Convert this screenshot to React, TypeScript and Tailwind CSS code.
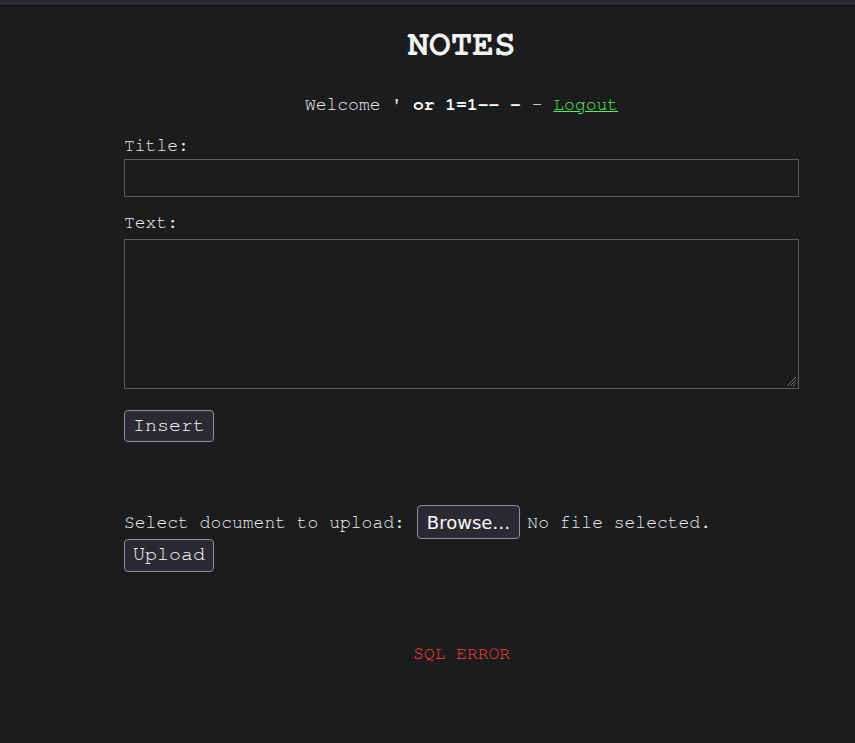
const ResizeGrip = () => (
  <svg width="11" height="11" viewBox="0 0 11 11" className="pointer-events-none absolute bottom-[2px] right-[2px]">
    <path d="M10 1L1 10M10 4L4 10M10 7L7 10" stroke="#6b6b6b" strokeWidth="1" />
  </svg>
);

const App = () => {
  return (
    <div className="min-h-[743px] bg-[#1b1c1e] font-['Nimbus_Mono_PS','FreeMono','Courier_New','Liberation_Mono',monospace] text-[18px] leading-[21px] text-[#ececec]">
      <div className="h-[6px] border-b border-[#0c0c0e] bg-[#2b2a33]" />

      <div className="ml-[124px] w-[675px]">
        <h1 className="mt-[18px] text-center text-[36px] font-bold leading-[41px] text-[#f2f2f2]">NOTES</h1>

        <p className="mt-[30px] text-center">
          Welcome ' <b className="font-bold text-[#ffffff]">or 1=1-- -</b> – <a href="#" className="text-[#55f055] underline">Logout</a>
        </p>

        <form className="mt-[20px]" onSubmit={(e) => e.preventDefault()}>
          <label className="block">Title:</label>
          <input
            type="text"
            className="mt-[2px] block h-[38px] w-full border border-[#5b5b5b] bg-transparent px-[4px] text-[#ececec] outline-none"
          />

          <label className="mt-[16px] block">Text:</label>
          <div className="relative mt-[5px]">
            <textarea className="block h-[150px] w-full resize-none border border-[#5b5b5b] bg-transparent p-[4px] text-[#ececec] outline-none" />
            <ResizeGrip />
          </div>

          <button
            type="submit"
            className="mt-[21px] block h-[32px] w-[90px] rounded-[4px] border border-[#8f8f9d] bg-[#2b2a33] pb-[3px] text-[20px] leading-[22px] text-[#fbfbfe]"
          >
            Insert
          </button>
        </form>

        <div className="mt-[63px]">
          <div className="flex h-[34px] items-center">
            <span className="mt-[3px]">Select document to upload:</span>
            <span className="ml-[12px] flex h-[34px] items-center rounded-[4px] border border-[#8f8f9d] bg-[#2b2a33] px-[9px] font-['DejaVu_Sans',sans-serif] text-[18px] text-[#fbfbfe]">
              Browse…
            </span>
            <span className="ml-[7px] mt-[3px]">No file selected.</span>
          </div>
          <button className="block h-[33px] w-[90px] rounded-[4px] border border-[#8f8f9d] bg-[#2b2a33] pb-[3px] text-[20px] leading-[23px] text-[#fbfbfe]">
            Upload
          </button>
        </div>

        <p className="mt-[72px] text-center text-[#ff3c3c]">SQL ERROR</p>
      </div>
    </div>
  );
};

export default App;
